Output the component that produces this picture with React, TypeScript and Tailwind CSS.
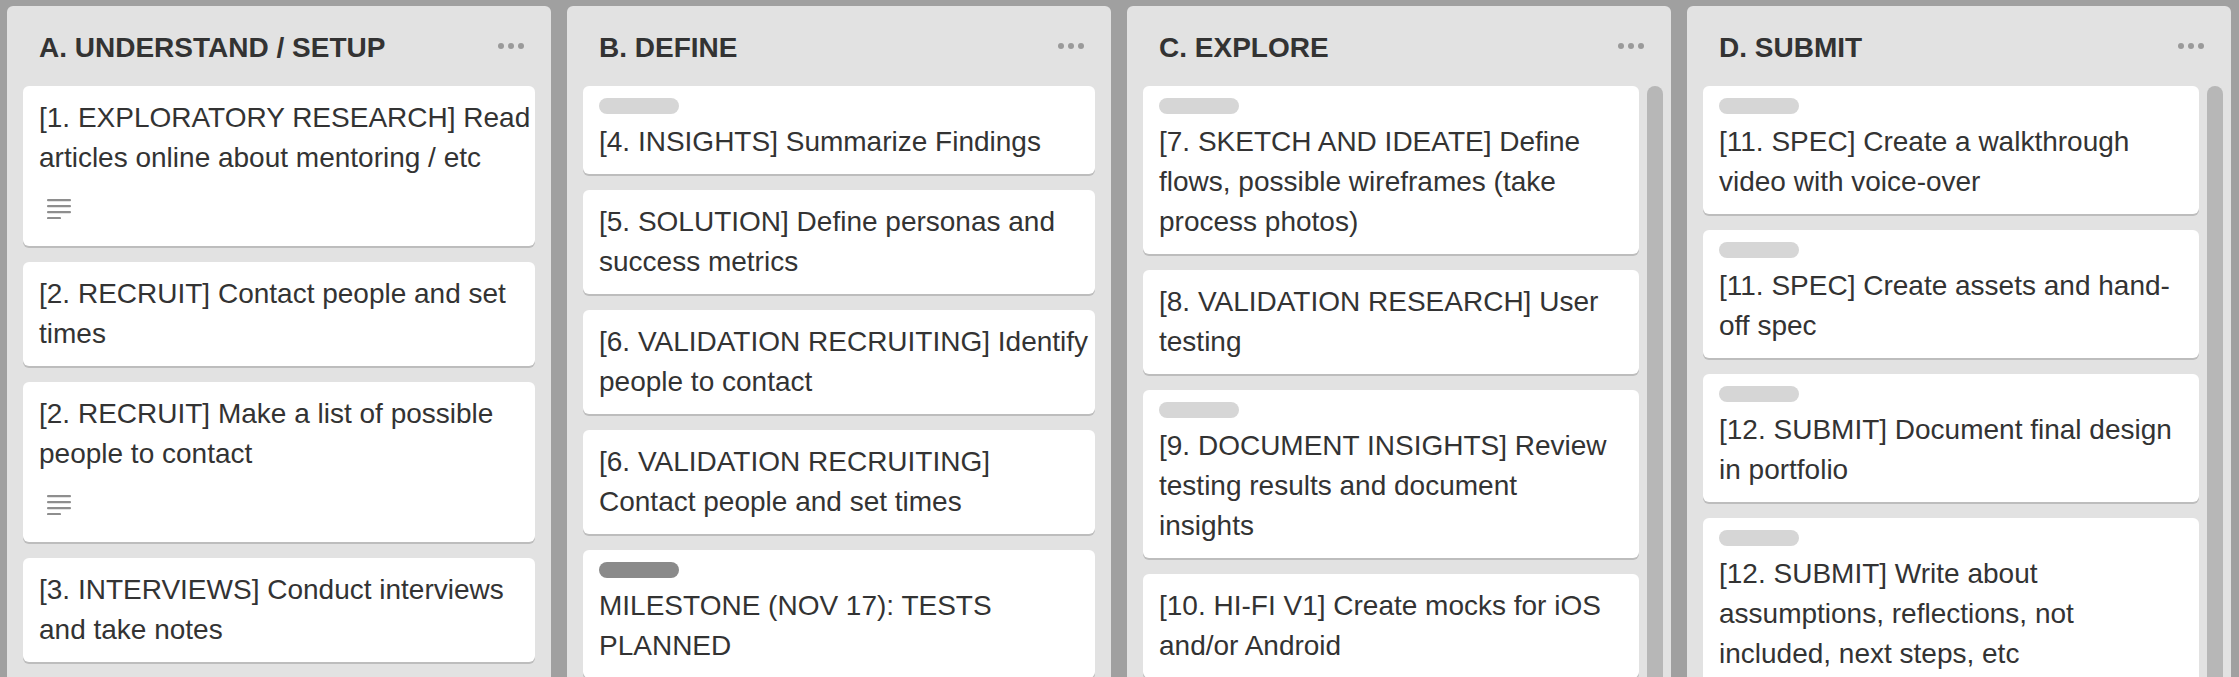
type Card = {
  label?: 'light' | 'dark';
  lines: string[];
  desc?: boolean;
};

type List = {
  title: string;
  scroll?: boolean;
  cards: Card[];
};

const lists: List[] = [
  {
    title: 'A. UNDERSTAND / SETUP',
    cards: [
      { lines: ['[1. EXPLORATORY RESEARCH] Read', 'articles online about mentoring / etc'], desc: true },
      { lines: ['[2. RECRUIT] Contact people and set', 'times'] },
      { lines: ['[2. RECRUIT] Make a list of possible', 'people to contact'], desc: true },
      { lines: ['[3. INTERVIEWS] Conduct interviews', 'and take notes'] },
    ],
  },
  {
    title: 'B. DEFINE',
    cards: [
      { label: 'light', lines: ['[4. INSIGHTS] Summarize Findings'] },
      { lines: ['[5. SOLUTION] Define personas and', 'success metrics'] },
      { lines: ['[6. VALIDATION RECRUITING] Identify', 'people to contact'] },
      { lines: ['[6. VALIDATION RECRUITING]', 'Contact people and set times'] },
      { label: 'dark', lines: ['MILESTONE (NOV 17): TESTS', 'PLANNED'] },
    ],
  },
  {
    title: 'C. EXPLORE',
    scroll: true,
    cards: [
      {
        label: 'light',
        lines: ['[7. SKETCH AND IDEATE] Define', 'flows, possible wireframes (take', 'process photos)'],
      },
      { lines: ['[8. VALIDATION RESEARCH] User', 'testing'] },
      {
        label: 'light',
        lines: ['[9. DOCUMENT INSIGHTS] Review', 'testing results and document', 'insights'],
      },
      { lines: ['[10. HI-FI V1] Create mocks for iOS', 'and/or Android'] },
    ],
  },
  {
    title: 'D. SUBMIT',
    scroll: true,
    cards: [
      { label: 'light', lines: ['[11. SPEC] Create a walkthrough', 'video with voice-over'] },
      { label: 'light', lines: ['[11. SPEC] Create assets and hand-', 'off spec'] },
      { label: 'light', lines: ['[12. SUBMIT] Document final design', 'in portfolio'] },
      {
        label: 'light',
        lines: ['[12. SUBMIT] Write about', 'assumptions, reflections, not', 'included, next steps, etc'],
      },
    ],
  },
];

// description badge (four grey bars)
function DescIcon() {
  return (
    <svg width="24" height="20" viewBox="0 0 24 20" fill="#8e8e8e">
      <rect x="0" y="0" width="24" height="2.2" rx="1" />
      <rect x="0" y="6" width="24" height="2.2" rx="1" />
      <rect x="0" y="12" width="24" height="2.2" rx="1" />
      <rect x="0" y="18" width="14" height="2.2" rx="1" />
    </svg>
  );
}

function CardItem({ card }: { card: Card }) {
  return (
    <div className="mb-4 rounded-[6px] bg-white px-4 pt-3 pb-3 shadow-[0_2px_0_#bdbdbd]">
      {card.label && (
        <div
          className={`mb-2 h-4 w-20 rounded-full ${card.label === 'dark' ? 'bg-[#8a8a8a]' : 'bg-[#d6d6d6]'}`}
        />
      )}
      <div className="text-[28px] leading-[40px] text-[#333333]">
        {card.lines.map((line, i) => (
          <div key={i} className="whitespace-nowrap">
            {line}
          </div>
        ))}
      </div>
      {card.desc && (
        <div className="mt-[11px] mb-[5px] flex h-10 items-center pl-2">
          <DescIcon />
        </div>
      )}
    </div>
  );
}

function ListColumn({ list }: { list: List }) {
  return (
    <div className="h-[720px] w-[544px] shrink-0 overflow-hidden rounded-[6px] bg-[#e2e2e2]">
      <div className="flex items-start justify-between pt-[22px] pr-[27px] pb-[18px] pl-8">
        <h2 className="text-[28px] leading-[40px] font-bold text-[#333333]">{list.title}</h2>
        <div className="mt-[15px] flex gap-1">
          <span className="size-[6px] rounded-full bg-[#9a9a9a]" />
          <span className="size-[6px] rounded-full bg-[#9a9a9a]" />
          <span className="size-[6px] rounded-full bg-[#9a9a9a]" />
        </div>
      </div>
      {list.scroll ? (
        <div className="flex items-start gap-2 pr-2 pl-4">
          <div className="w-[496px] shrink-0">
            {list.cards.map((c, i) => (
              <CardItem key={i} card={c} />
            ))}
          </div>
          <div className="h-[640px] w-4 rounded-full bg-[#b7b7b7]" />
        </div>
      ) : (
        <div className="px-4">
          {list.cards.map((c, i) => (
            <CardItem key={i} card={c} />
          ))}
        </div>
      )}
    </div>
  );
}

export default function App() {
  return (
    <div className="flex h-[677px] w-full gap-4 overflow-hidden bg-[#a0a0a0] pt-[6px] pl-[7px] font-['Liberation_Sans',Arial,sans-serif]">
      {lists.map((l) => (
        <ListColumn key={l.title} list={l} />
      ))}
    </div>
  );
}
